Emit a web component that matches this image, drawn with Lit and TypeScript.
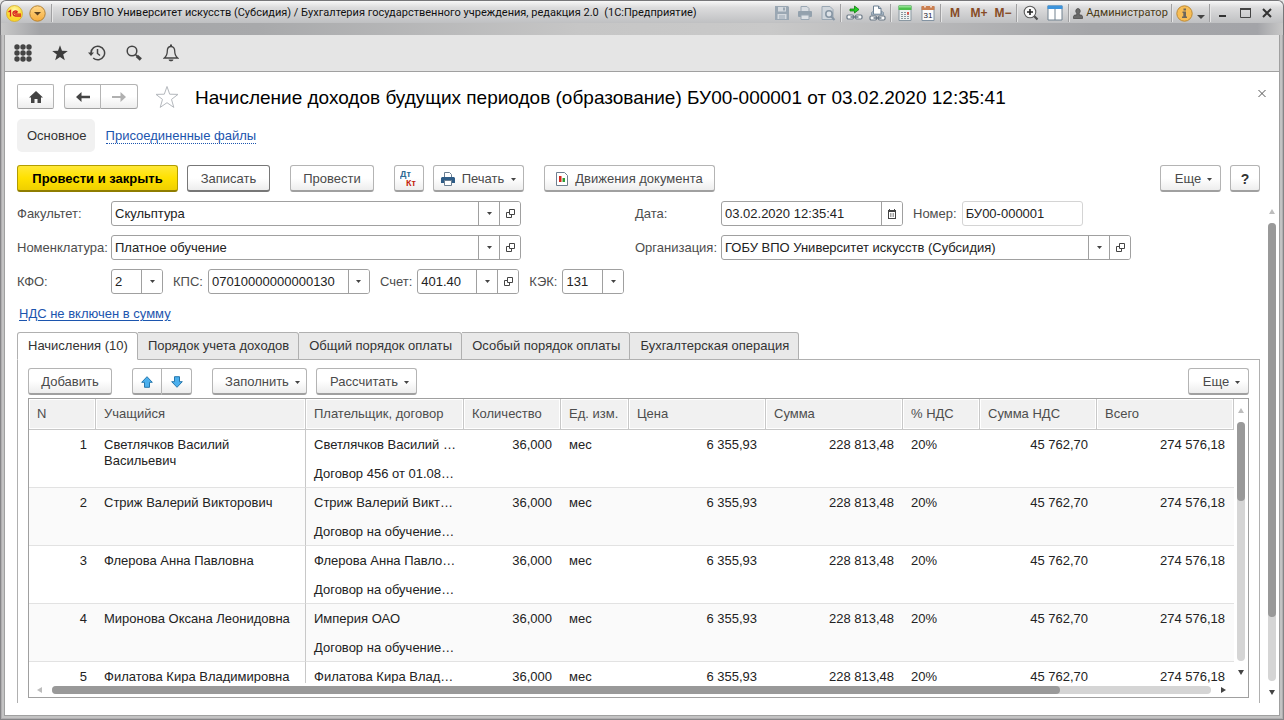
import { LitElement, html, css, nothing } from "lit";
import { customElement } from "lit/decorators.js";
import { classMap } from "lit/directives/class-map.js";

const caret = html`<svg class="caret" width="5" height="3" viewBox="0 0 5 3" aria-hidden="true"><path d="M0 0h5L2.5 3z" fill="#444" /></svg>`;

const openIcon = html`<svg width="11" height="11" viewBox="0 0 11 11" fill="none" stroke="#444" aria-hidden="true">
  <path d="M4.500 1.500h5v5h-5zM4.500 4.500h-3v5h5v-3" />
</svg>`;

const calendarIcon = html`<svg width="10" height="10" viewBox="0 0 10 10" aria-hidden="true">
  <path d="M2 0h1v1h4V0h1v1h1v9H1V1h1z" fill="#444" />
  <path d="M2 3h6v6H2z" fill="#fff" />
  <path d="M3 5h4M3 7h4" stroke="#444" stroke-dasharray="1 .5" />
</svg>`;

const icon = (name: string) => {
  switch (name) {
    case "save":
      return html`<svg width="16" height="16" viewBox="0 0 16 16"><path d="M1 1h13l1 1v13H1z" fill="#9aa7b3" /><path d="M4 2h8v4.500H4zM3.500 9h9v5h-9z" fill="#d4d9de" /><path d="M9 2.500h2v3H9zM5 10.500h6v1H5zM5 12.500h6v1H5z" fill="#9aa7b3" /></svg>`;
    case "print":
      return html`<svg width="16" height="16" viewBox="0 0 16 16"><path d="M4 1.500h6l2 2V7H4z" fill="#d9dde2" stroke="#9aa7b3" /><rect x="1" y="6" width="14" height="6" rx="1" fill="#93a1ad" /><path d="M4 10h8v4.500H4z" fill="#dde1e5" stroke="#9aa7b3" /></svg>`;
    case "preview":
      return html`<svg width="16" height="16" viewBox="0 0 16 16"><path d="M2 1.500h8l3 3v10H2z" fill="#d0d6dc" stroke="#9aa7b3" /><circle cx="9" cy="9" r="3.200" fill="#dde2e7" stroke="#8796a4" stroke-width="1.600" /><path d="M11.300 11.500l3.200 3.500" stroke="#8796a4" stroke-width="2" /></svg>`;
    case "link":
      return html`<svg width="17" height="17" viewBox="0 0 17 17"><path d="M4 4h4.500V1L13 4.500 8.500 8V6H4z" fill="#22d022" stroke="#117a11" stroke-width=".8" /><g fill="#fafafa" stroke="#6b7986" stroke-width="1.200"><rect x="1" y="10" width="6.500" height="4" rx="1.200" /><rect x="9.500" y="10" width="6.500" height="4" rx="1.200" /></g><path d="M4.500 12h8" stroke="#6b7986" stroke-width="1.500" /></svg>`;
    case "link-print":
      return html`<svg width="17" height="17" viewBox="0 0 17 17"><path d="M4.500 1h5l2.500 2.500v6h-7.500z" fill="#fff" stroke="#6b7f92" /><path d="M9.500 1v2.500H12" fill="none" stroke="#6b7f92" /><path d="M2.500 7.500l2-1.500v3h8V6l2 1.500v2.500h-12z" fill="#a8b7c6" stroke="#6b7f92" stroke-width=".6" /><g fill="#fafafa" stroke="#6b7986" stroke-width="1.200"><rect x="1" y="11" width="6.500" height="4" rx="1.200" /><rect x="9.500" y="11" width="6.500" height="4" rx="1.200" /></g><path d="M4.500 13h8" stroke="#6b7986" stroke-width="1.500" /></svg>`;
    case "calc":
      return html`<svg width="14" height="16" viewBox="0 0 14 16"><path d="M1 1h12v14.500H1z" fill="#eef1f0" stroke="#8a98a2" /><path d="M.5.5h13V5H.5z" fill="#4cc04c" /><path d="M1 1h12v1.500H1z" fill="#8ee08e" /><path d="M3 7.500h8M3 9.500h8M3 11.500h8M3 13.500h8" stroke="#8b979f" stroke-dasharray="2 1" /><path d="M9 7h2v2.500H9z" fill="#e0584e" /></svg>`;
    case "calendar":
      return html`<svg width="14" height="16" viewBox="0 0 14 16"><path d="M1 2h12v13.500H1z" fill="#fbfbfb" stroke="#8393a2" /><path d="M.5 1h13v4H.5z" fill="#cb7f50" /><path d="M3 0h2v2.500H3zM9 0h2v2.500H9z" fill="#f0d6c6" /><text x="7" y="13" text-anchor="middle" font-family="Liberation Sans, sans-serif" font-size="8" fill="#223">31</text></svg>`;
    case "zoom":
      return html`<svg width="16" height="16" viewBox="0 0 16 16"><circle cx="7" cy="7" r="5.800" fill="#fafafa" stroke="#5c5c5c" stroke-width="1.100" /><path d="M4 7h6M7 4v6" stroke="#222" stroke-width="1.600" /><path d="M11.300 11.300l3.200 3.200" stroke="#4c4c4c" stroke-width="2.200" /></svg>`;
    case "panes":
      return html`<svg width="16" height="16" viewBox="0 0 16 16"><path d="M1 1h14v14H1z" fill="#fff" stroke="#71818f" /><path d="M.5.5h15V4H.5z" fill="#3d94dc" /><path d="M8 4v11" stroke="#71818f" /></svg>`;
    default:
      return nothing;
  }
};

const separator = html`<span class="separator"></span>`;

interface Column {
  title: string;
  cls: string;
}

const columns: Column[] = [
  { title: "N", cls: "c-n" },
  { title: "Учащийся", cls: "c-student" },
  { title: "Плательщик, договор", cls: "c-payer" },
  { title: "Количество", cls: "c-qty" },
  { title: "Ед. изм.", cls: "c-unit" },
  { title: "Цена", cls: "c-sum" },
  { title: "Сумма", cls: "c-sum" },
  { title: "% НДС", cls: "c-rate" },
  { title: "Сумма НДС", cls: "c-vat" },
  { title: "Всего", cls: "c-sum" },
];

const rows = [
  ["Светлячков Василий Васильевич", "Светлячков Василий …", "Договор 456 от 01.08…"],
  ["Стриж Валерий Викторович", "Стриж Валерий Викт…", "Договор на обучение…"],
  ["Флерова Анна Павловна", "Флерова Анна Павло…", "Договор на обучение…"],
  ["Миронова Оксана Леонидовна", "Империя ОАО", "Договор на обучение…"],
  ["Филатова Кира Владимировна", "Филатова Кира Влад…", ""],
];

const tabs = [
  "Начисления (10)",
  "Порядок учета доходов",
  "Общий порядок оплаты",
  "Особый порядок оплаты",
  "Бухгалтерская операция",
];

@customElement("app-root")
export class AppRoot extends LitElement {
  static styles = css`
    :host {
      display: flex;
      flex-direction: column;
      box-sizing: border-box;
      height: 100vh;
      overflow: hidden;
      font: 13px/16px "Liberation Sans", Arial, sans-serif;
      color: #333;
      background: #e8e8e8;
    }
    * { box-sizing: border-box; }
    button, input { font: inherit; color: inherit; margin: 0; }
    button { padding: 0; cursor: pointer; }
    svg { display: block; flex: none; }

    .titlebar {
      flex: none;
      height: 35px;
      border: 1px solid #77777a;
      border-bottom: 0;
      border-radius: 6px 6px 0 0;
      background:
        linear-gradient(#f8f8f8, #dcdcdd 30%, #bfc0c2) 0 0 / 100% 22px no-repeat,
        linear-gradient(90deg, #c8c8c8, #a3a4a7 3%, #a8a9ab 20%, #c6c6c6 45%, #c9c9c9 60%, #a5a6a9 85%, #a3a4a8 98%, #c8c8c8);
    }
    .titlebar-row {
      display: flex;
      align-items: center;
      height: 24px;
      padding: 0 5px 0 4px;
      font: 11px/14px Roboto, "Noto Sans", sans-serif;
      color: #111;
    }
    .logo, .menu-ball {
      display: flex;
      align-items: center;
      justify-content: center;
      border: 0;
      background: none;
    }
    .logo { width: 18px; }
    .menu-ball { width: 18px; margin-left: 5px; }
    .separator {
      flex: none;
      width: 4px;
      height: 18px;
      background: linear-gradient(90deg, transparent 1px, #a0a0a2 1px 2px, #e6e6e6 2px 3px, transparent 3px);
    }
    .after-menu { margin: 0 8px 0 4px; }
    .caption { flex: 1; min-width: 0; overflow: hidden; white-space: pre; }
    .tool {
      display: flex;
      flex: none;
      align-items: center;
      justify-content: center;
      width: 23px;
      height: 22px;
      border: 0;
      background: none;
    }
    .memory {
      width: 24px;
      color: #874b25;
      font: bold 12px/14px "Liberation Sans", sans-serif;
    }
    .wide { width: 24px; }
    .user { gap: 3px; width: 99px; color: #4a3a14; }
    .info { width: 20px; }
    .info-arrow { width: 14px; padding-top: 8px; }
    .sys { width: 22px; }

    .window {
      flex: 1;
      min-height: 0;
      display: flex;
      flex-direction: column;
      margin: 0 5px 5px;
      background: #fff;
      box-shadow: 0 0 0 1px #a0a0a0, 0 0 0 3px #c3c3c3, 0 0 0 4px #b0aeb0, 0 0 0 5px #858587;
      clip-path: inset(0 -5px -5px -5px);
    }
    .toolbar {
      flex: none;
      display: flex;
      align-items: center;
      height: 37px;
      padding-left: 5px;
      background: #e5e5e5;
      border-bottom: 1px solid #a0a0a0;
    }
    .toolbar .glyph {
      display: flex;
      align-items: center;
      justify-content: center;
      width: 26px;
      height: 26px;
      margin-right: 11px;
      border: 0;
      background: none;
    }
    .page {
      flex: 1;
      min-height: 0;
      display: flex;
      flex-direction: column;
      padding: 12px 3px 12px 12px;
    }
    .heading { flex: none; display: flex; align-items: center; height: 25px; padding-right: 8px; }
    h1 {
      flex: 1;
      margin: 0 0 0 16px;
      padding-top: 2px;
      font-size: 19px;
      line-height: 24px;
      font-weight: 400;
      color: #000;
      white-space: nowrap;
    }
    .star { margin-left: 17px; border: 0; background: none; }
    .close { align-self: flex-start; width: 12px; height: 18px; border: 0; background: none; }

    .btn {
      display: inline-flex;
      align-items: center;
      justify-content: center;
      height: 27px;
      padding-top: 2px;
      border: 1px solid #b4b4b4;
      border-bottom-color: #a0a0a0;
      border-bottom-width: 2px;
      border-radius: 3px;
      background: linear-gradient(#fff 50%, #ededed);
      color: #4a4a4a;
      white-space: nowrap;
    }
    .btn .caret { margin: 1px 0 0 6px; }
    .btn.nav { height: 25px; width: 37px; padding-top: 0; border-radius: 2px; border-bottom-width: 1px; }
    .group { display: flex; }
    .group .btn:first-child { border-radius: 3px 0 0 3px; }
    .group .btn:last-child { border-radius: 0 3px 3px 0; border-left: 0; }
    .btn.primary {
      width: 161px;
      background: linear-gradient(#ffe838, #ffe100 50%, #efcf00);
      border-color: #b29d00;
      border-bottom-color: #8f7d00;
      color: #000;
      font-weight: 700;
    }
    .btn.strong { border-color: #777; }
    .w30 { width: 30px; }
    .w61 { width: 61px; padding-left: 6px; }
    .w83 { width: 83px; }
    .w84 { width: 84px; }
    .w91 { width: 91px; }
    .w95 { width: 95px; padding-left: 6px; }
    .w101 { width: 101px; padding-left: 6px; }
    .w171 { width: 171px; }
    .gap9 { margin-left: 9px; }
    .gap20 { margin-left: 20px; }
    .gap10 { margin-left: 10px; }
    .push { margin-left: auto; }
    .icon-text { gap: 7px; }
    .icon-text .caret { margin-left: 0; }
    .help { font-weight: 700; font-size: 14px; color: #333; }

    .sections { flex: none; display: flex; align-items: center; margin-top: 10px; height: 33px; }
    .current {
      padding: 1px 8px 0 10px;
      line-height: 32px;
      border-radius: 5px;
      background: #f1f1f1;
    }
    a { color: #1c55ae; text-decoration: none; }
    .files { margin-left: 11px; padding-top: 1px; line-height: 14px; border-bottom: 1px dotted #1c55ae; }
    .commands { flex: none; display: flex; margin-top: 13px; padding-right: 16px; }

    .scroll-area { flex: 1; min-height: 0; display: flex; gap: 8px; margin-top: 9px; }
    .form { flex: 1; min-width: 0; display: flex; flex-direction: column; }
    .line { flex: none; display: flex; align-items: center; height: 25px; margin-bottom: 9px; }
    .half { flex: 0 0 618px; display: flex; align-items: center; }
    label { color: #4d4d4d; white-space: nowrap; }
    .lab-left { width: 94px; }
    .lab-right { width: 86px; }
    .lab-inline { margin: 0 5px 0 10px; }
    .field {
      display: flex;
      height: 25px;
      border: 1px solid #a0a0a0;
      border-radius: 3px;
      background: #fff;
      overflow: hidden;
    }
    .field input { flex: 1; min-width: 0; width: 0; padding: 0 3px; border: 0; outline: 0; background: none; color: #222; }
    .field button {
      display: flex;
      align-items: center;
      justify-content: center;
      width: 21px;
      border: 0;
      border-left: 1px solid #a0a0a0;
      background: #fff;
    }
    .field .caret { margin: 0; }
    .field.readonly { border-color: #d4d4d4; }
    .f410 { width: 410px; }
    .f182 { width: 182px; }
    .f162 { width: 162px; }
    .f121 { width: 121px; }
    .f102 { width: 102px; }
    .f62 { width: 62px; }
    .f52 { width: 52px; }
    .vat { align-self: flex-start; margin: 3px 0 10px 2px; text-decoration: underline; text-underline-offset: 2px; }

    .tabs { flex: none; display: flex; margin-bottom: -1px; position: relative; }
    .tab {
      height: 28px;
      padding: 0 9px 1px 10px;
      border: 1px solid #b0b0b0;
      border-left-width: 0;
      border-radius: 0 3px 0 0;
      background: #e9e9e9;
      color: #333;
      white-space: nowrap;
    }
    .tab.active { border-left-width: 1px; border-radius: 3px 3px 0 0; border-bottom-color: #fff; background: #fff; }
    .panel {
      flex: 1;
      min-height: 0;
      display: flex;
      flex-direction: column;
      padding: 8px 10px 5px;
      border: 1px solid #b0b0b0;
      border-bottom: 0;
    }
    .panel-tools { flex: none; display: flex; margin-bottom: 3px; }

    .grid {
      flex: 1;
      min-height: 0;
      display: grid;
      grid-template-columns: 1fr 14px;
      grid-template-rows: 1fr 14px;
      border: 1px solid #a0a0a0;
    }
    .viewport { overflow: hidden; min-height: 0; }
    table { width: 100%; table-layout: fixed; border-collapse: separate; border-spacing: 0; color: #222; }
    .c-n { width: 67px; }
    .c-student { width: 210px; }
    .c-payer { width: 158px; }
    .c-qty { width: 97px; }
    .c-unit { width: 68px; }
    .c-sum { width: 137px; }
    .c-rate { width: 77px; }
    .c-vat { width: 117px; }
    th {
      height: 31px;
      padding: 0 8px;
      text-align: left;
      font-weight: 400;
      color: #4d4d4d;
      white-space: nowrap;
      background: #f1f1f1;
      border-right: 1px solid #c8c8c8;
      border-bottom: 1px solid #c8c8c8;
      box-shadow: inset 0 0 0 1px #fff;
    }
    td {
      height: 58px;
      padding: 7px 8px 0;
      vertical-align: top;
      border-bottom: 1px solid #e2e2e2;
      white-space: nowrap;
    }
    tr:nth-child(even) td { background: #fafafa; }
    td.num { text-align: right; padding-right: 9px; }
    td.name { white-space: normal; border-right: 1px solid #c8c8c8; }
    .contract { margin-top: 13px; }

    .bar { display: flex; align-items: center; }
    .bar.vertical { flex-direction: column; }
    .track { flex: 1; border-radius: 4px; background: #d5d5d5; }
    .vertical .track { width: 8px; }
    .horizontal .track { height: 8px; }
    .thumb { border-radius: 4px; background: #999; }
    .page-bar { width: 8px; padding: 8px 0; gap: 9px; }
    .page-thumb { height: 86%; }
    .grid-bar { padding: 9px 0 8px; gap: 9px; }
    .grid-thumb { height: 33%; }
    .side-bar { padding: 0 8px; gap: 10px; }
    .side-thumb { width: 87%; height: 8px; }
  `;

  private arrow(dir: "up" | "down" | "left" | "right") {
    const d = { up: "M0 5L3 0l3 5z", down: "M0 0h6L3 5z", left: "M5 0v6L0 3z", right: "M0 0v6l5-3z" }[dir];
    const fill = dir === "up" || dir === "left" ? "#bdbdbd" : "#444";
    const tall = dir === "left" || dir === "right";
    return html`<svg width=${tall ? 5 : 6} height=${tall ? 6 : 5} aria-hidden="true"><path d=${d} fill=${fill} /></svg>`;
  }

  private field(id: string, value: string, size: string, buttons: string[] = ["list"], readonly = false) {
    return html`<div class=${classMap({ field: true, [size]: true, readonly })}>
      <input id=${id} type="text" .value=${value} ?readonly=${readonly} />
      ${buttons.map((b) =>
        b === "list"
          ? html`<button aria-label="Выбрать из списка">${caret}</button>`
          : b === "open"
            ? html`<button aria-label="Открыть">${openIcon}</button>`
            : html`<button aria-label="Календарь">${calendarIcon}</button>`
      )}
    </div>`;
  }

  private tool(name: string, label: string, extra = "") {
    return html`<button class="tool ${extra}" aria-label=${label}>${icon(name)}</button>`;
  }

  private renderTitlebar() {
    return html`<header class="titlebar">
      <div class="titlebar-row">
        <span class="logo">
          <svg width="17" height="17" viewBox="0 0 17 17"><defs><radialGradient id="ly" cx=".5" cy=".3"><stop offset="0" stop-color="#fffbb0" /><stop offset="1" stop-color="#fbd62a" /></radialGradient></defs><circle cx="8.500" cy="8.500" r="8" fill="url(#ly)" stroke="#d2ab35" stroke-width=".8" /><path d="M2.500 7l2-1.500V11.500M11.700 7.300A2.500 2.500 0 1 0 9.500 11H15M10.800 8.300a1 1 0 1 0-1 .9H15" fill="none" stroke="#d8201c" stroke-width="1.300" /></svg>
        </span>
        <button class="menu-ball" aria-label="Главное меню">
          <svg width="17" height="17" viewBox="0 0 17 17"><defs><linearGradient id="lo" x2="0" y2="1"><stop offset="0" stop-color="#ffd98a" /><stop offset="1" stop-color="#f5ab3c" /></linearGradient></defs><circle cx="8.500" cy="8.500" r="7.700" fill="url(#lo)" stroke="#b38235" /><path d="M5 7h7l-3.500 3.500z" fill="#5a4020" /></svg>
        </button>
        <span class="separator after-menu"></span>
        <span class="caption">ГОБУ ВПО Университет искусств (Субсидия) / Бухгалтерия государственного учреждения, редакция 2.0  (1С:Предприятие)</span>
        ${this.tool("save", "Сохранить")}${this.tool("print", "Печать")}${this.tool("preview", "Предварительный просмотр")}
        ${separator}${this.tool("link", "Перейти по ссылке")}${this.tool("link-print", "Получить ссылку")}
        ${separator}${this.tool("calc", "Калькулятор")}${this.tool("calendar", "Календарь")}${separator}
        <button class="tool memory">M</button><button class="tool memory">M+</button><button class="tool memory">M−</button>
        ${separator}${this.tool("zoom", "Масштаб", "wide")}${this.tool("panes", "Окна", "wide")}${separator}
        <button class="tool user">
          <svg width="10" height="11" viewBox="0 0 10 11"><path d="M5 .5a2.300 2.600 0 0 1 1.300 4.700V7H8.500l1 1.500V10.500H.5V8.500l1-1.500h2.200V5.200A2.300 2.600 0 0 1 5 .5z" fill="#6a6a6a" stroke="#444" stroke-width=".7" /></svg>
          Администратор
        </button>
        ${separator}
        <button class="tool info" aria-label="Информация">
          <svg width="17" height="17" viewBox="0 0 17 17"><circle cx="8.500" cy="8.500" r="7.700" fill="#f7bd55" stroke="#bd8a35" /><path d="M7.500 3.500h2.500v2H7.500zM6.500 6.500H10v5h1V13H6v-1.500h1.300V8h-.8z" fill="#6c665c" /></svg>
        </button>
        <button class="tool info-arrow" aria-label="Ещё"><svg width="8" height="4"><path d="M0 0h8L4 4z" fill="#444" /></svg></button>
        ${separator}
        <button class="tool sys" aria-label="Свернуть"><svg width="10" height="10"><path d="M1 7h7v2H1z" fill="#333" /></svg></button>
        <button class="tool sys" aria-label="Развернуть"><svg width="11" height="10"><path d="M.5 1h10v8.500H.5z" fill="none" stroke="#444" /><path d="M0 0h11v2H0z" fill="#444" /></svg></button>
        <button class="tool sys" aria-label="Закрыть"><svg width="10" height="10"><path d="M1 1l8 8M9 1L1 9" stroke="#333" stroke-width="2" /></svg></button>
      </div>
    </header>`;
  }

  private renderToolbar() {
    return html`<nav class="toolbar">
      <button class="glyph" aria-label="Меню функций"><svg width="18" height="18" fill="#444">${[3, 9, 15].map((y) => [3, 9, 15].map((x) => this.dot(x, y)))}</svg></button>
      <button class="glyph" aria-label="Избранное"><svg width="16" height="16" viewBox="0 0 16 16"><path d="M8 .3l2 5.500 5.800.2-4.600 3.600 1.600 5.700L8 12l-4.800 3.300 1.600-5.700L.2 6 6 5.800z" fill="#3c3c3c" /></svg></button>
      <button class="glyph" aria-label="История"><svg width="18" height="16" viewBox="0 0 18 16" fill="none" stroke="#444" stroke-width="1.500"><path d="M3 8a6.800 6.800 0 1 1 2.200 5" /><path d="M9.500 4v4.500l2.500 2" /><path d="M0 7.500h6L3 11z" fill="#444" stroke="none" /></svg></button>
      <button class="glyph" aria-label="Поиск"><svg width="16" height="16" viewBox="0 0 16 16" fill="none" stroke="#444"><circle cx="6" cy="6" r="4.800" stroke-width="1.500" /><path d="M9.500 9.500l1.500 1.500" stroke-width="1.500" /><path d="M10.800 10.800l4 3.700" stroke-width="3.200" /></svg></button>
      <button class="glyph" aria-label="Оповещения"><svg width="16" height="18" viewBox="0 0 16 18" fill="none" stroke="#444" stroke-width="1.300"><path d="M8 2.500c-2.600 0-3.700 2-3.700 4.500 0 3.500-.8 5.300-3 7h13.400c-2.200-1.700-3-3.500-3-7 0-2.500-1.100-4.500-3.700-4.500z" /><path d="M8 .5v2" stroke-width="2" /><path d="M5.500 15.500h5c-.5 1.500-1.500 1.700-2.500 1.700s-2-.2-2.500-1.700z" fill="#444" stroke="none" /></svg></button>
    </nav>`;
  }

  private dot(x: number, y: number) {
    return html`<svg x=${x - 3} y=${y - 3} width="6" height="6"><circle cx="3" cy="3" r="2.700" /></svg>`;
  }

  private renderTable() {
    return html`<table>
      <thead>
        <tr>${columns.map((c) => html`<th class=${c.cls} scope="col">${c.title}</th>`)}</tr>
      </thead>
      <tbody>
        ${rows.map(
          ([student, payer, contract], i) => html`<tr>
            <td class="num">${i + 1}</td>
            <td class="name">${student}</td>
            <td><div>${payer}</div>${contract ? html`<div class="contract">${contract}</div>` : nothing}</td>
            <td class="num">36,000</td>
            <td>мес</td>
            <td class="num">6 355,93</td>
            <td class="num">228 813,48</td>
            <td>20%</td>
            <td class="num">45 762,70</td>
            <td class="num">274 576,18</td>
          </tr>`
        )}
      </tbody>
    </table>`;
  }

  render() {
    return html`
      ${this.renderTitlebar()}
      <div class="window">
        ${this.renderToolbar()}
        <main class="page">
          <div class="heading">
            <button class="btn nav" aria-label="Начальная страница"><svg width="14" height="12" viewBox="0 0 14 12"><path d="M7 0l7 6.500h-2V12H8.500V8h-3v4H2V6.500H0z" fill="#444" /></svg></button>
            <div class="group gap10">
              <button class="btn nav" aria-label="Назад"><svg width="14" height="10" viewBox="0 0 14 10"><path d="M5.500 0v3.700H14v2.600H5.500V10L0 5z" fill="#444" /></svg></button>
              <button class="btn nav" aria-label="Вперед"><svg width="14" height="10" viewBox="0 0 14 10"><path d="M8.500 0v4H0v2h8.500v4L14 5z" fill="#b0b0b0" /></svg></button>
            </div>
            <button class="star" aria-label="В избранное"><svg width="24" height="24" viewBox="0 0 24 24"><path d="M12 1.500l2.700 7.700 8.300.2-6.500 5 2.300 8L12 17.700l-6.800 4.700 2.300-8-6.500-5 8.300-.2z" fill="#fff" stroke="#b4b8bd" /></svg></button>
            <h1>Начисление доходов будущих периодов (образование) БУ00-000001 от 03.02.2020 12:35:41</h1>
            <button class="close" aria-label="Закрыть"><svg width="12" height="18"><path d="M2.500 6l7 7M9.500 6l-7 7" stroke="#555" /></svg></button>
          </div>

          <div class="sections">
            <span class="current">Основное</span>
            <a class="files" href="#">Присоединенные файлы</a>
          </div>

          <div class="commands">
            <button class="btn primary">Провести и закрыть</button>
            <button class="btn strong w83 gap9">Записать</button>
            <button class="btn w84 gap20">Провести</button>
            <button class="btn w30 gap20" aria-label="Проводки"><svg width="18" height="18" font-family="Liberation Sans, sans-serif" font-size="9" font-weight="700"><text x="0" y="7" fill="#2d6a94">Дт</text><text x="6" y="16" fill="#c41f0e">Кт</text></svg></button>
            <button class="btn icon-text w91 gap9"><svg width="14" height="14" viewBox="0 0 14 14"><path d="M3.500.5h5l2 2V6h-7z" fill="#fff" stroke="#6b7f92" /><path d="M1 5h12l1 1v5H0V6z" fill="#2f5d87" /><path d="M3.500 8.500h7v5h-7z" fill="#fff" stroke="#6b7f92" /></svg>Печать ${caret}</button>
            <button class="btn icon-text w171 gap20"><svg width="12" height="14" viewBox="0 0 12 14"><path d="M.5.5h8l3 3v10H.5z" fill="#fff" stroke="#6f7f8f" /><path d="M3 4h2.500v6H3z" fill="#d5281d" /><path d="M6.500 6H9v4H6.500z" fill="#2e9e35" /></svg>Движения документа</button>
            <button class="btn w61 push">Еще ${caret}</button>
            <button class="btn help w30 gap9">?</button>
          </div>

          <div class="scroll-area">
            <div class="form">
              <div class="line">
                <div class="half"><label class="lab-left" for="faculty">Факультет:</label>${this.field("faculty", "Скульптура", "f410", ["list", "open"])}</div>
                <label class="lab-right" for="date">Дата:</label>${this.field("date", "03.02.2020 12:35:41", "f182", ["calendar"])}
                <label class="lab-inline" for="number">Номер:</label>${this.field("number", "БУ00-000001", "f121", [], true)}
              </div>
              <div class="line">
                <div class="half"><label class="lab-left" for="item">Номенклатура:</label>${this.field("item", "Платное обучение", "f410", ["list", "open"])}</div>
                <label class="lab-right" for="org">Организация:</label>${this.field("org", "ГОБУ ВПО Университет искусств (Субсидия)", "f410", ["list", "open"])}
              </div>
              <div class="line">
                <label class="lab-left" for="kfo">КФО:</label>${this.field("kfo", "2", "f52")}
                <label class="lab-inline" for="kps">КПС:</label>${this.field("kps", "07010000000000130", "f162")}
                <label class="lab-inline" for="account">Счет:</label>${this.field("account", "401.40", "f102", ["list", "open"])}
                <label class="lab-inline" for="kek">КЭК:</label>${this.field("kek", "131", "f62")}
              </div>
              <a class="vat" href="#">НДС не включен в сумму</a>

              <div class="tabs" role="tablist">
                ${tabs.map((t, i) => html`<button role="tab" aria-selected=${i === 0} class=${classMap({ tab: true, active: i === 0 })}>${t}</button>`)}
              </div>
              <section class="panel">
                <div class="panel-tools">
                  <button class="btn w84">Добавить</button>
                  <div class="group gap20">
                    <button class="btn w30" aria-label="Переместить вверх"><svg width="12" height="12" viewBox="0 0 12 12"><path d="M6 .7l5.300 5.600H8.500v5h-5v-5H.7z" fill="#4bb0ee" stroke="#2778ad" /></svg></button>
                    <button class="btn w30" aria-label="Переместить вниз"><svg width="12" height="12" viewBox="0 0 12 12"><path d="M6 11.300l5.300-5.600H8.500v-5h-5v5H.7z" fill="#4bb0ee" stroke="#2778ad" /></svg></button>
                  </div>
                  <button class="btn w95 gap20">Заполнить ${caret}</button>
                  <button class="btn w101 gap9">Рассчитать ${caret}</button>
                  <button class="btn w61 push">Еще ${caret}</button>
                </div>
                <div class="grid">
                  <div class="viewport">${this.renderTable()}</div>
                  <div class="bar vertical grid-bar">${this.arrow("up")}<div class="track"><div class="thumb grid-thumb"></div></div>${this.arrow("down")}</div>
                  <div class="bar horizontal side-bar">${this.arrow("left")}<div class="track"><div class="thumb side-thumb"></div></div>${this.arrow("right")}</div>
                </div>
              </section>
            </div>
            <div class="bar vertical page-bar">${this.arrow("up")}<div class="track"><div class="thumb page-thumb"></div></div>${this.arrow("down")}</div>
          </div>
        </main>
      </div>
    `;
  }
}
